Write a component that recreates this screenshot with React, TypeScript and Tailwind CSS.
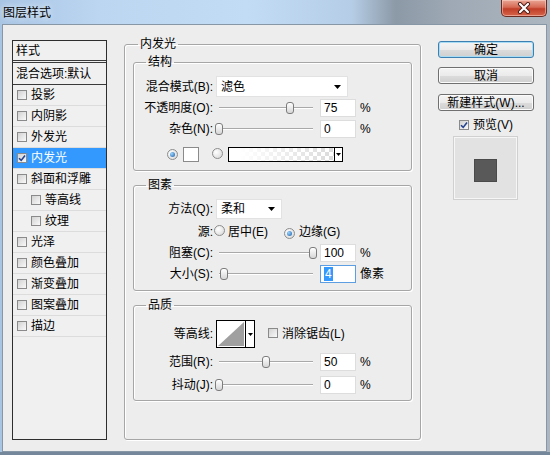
import React from "react";

type Item = { t: string; sel?: boolean; on?: boolean; indent?: boolean };

const ITEMS: Item[] = [
  { t: "投影" },
  { t: "内阴影" },
  { t: "外发光" },
  { t: "内发光", sel: true, on: true },
  { t: "斜面和浮雕" },
  { t: "等高线", indent: true },
  { t: "纹理", indent: true },
  { t: "光泽" },
  { t: "颜色叠加" },
  { t: "渐变叠加" },
  { t: "图案叠加" },
  { t: "描边" },
];

function Check({ on }: { on?: boolean }) {
  return (
    <span className="inline-flex w-[10px] h-[10px] shrink-0 items-center justify-center border border-[#8a8a8a] bg-[linear-gradient(135deg,#d2d2d2,#f9f9f9)]">
      {on && (
        <svg width="8" height="8" viewBox="0 0 8 8">
          <path d="M1 4.2 L3.2 6.4 L7 1.4" stroke="#24438f" strokeWidth="1.6" fill="none" />
        </svg>
      )}
    </span>
  );
}

function Radio({ on }: { on?: boolean }) {
  return (
    <span className="inline-flex w-[11px] h-[11px] shrink-0 items-center justify-center rounded-full border border-[#8c8c8c] bg-[radial-gradient(circle_at_35%_35%,#ffffff,#d4d4d4)]">
      {on && <span className="w-[5px] h-[5px] rounded-full bg-[radial-gradient(circle_at_35%_35%,#9ad6ff,#1b5aa6)]" />}
    </span>
  );
}

function Arrow() {
  return (
    <svg width="7" height="4" viewBox="0 0 7 4">
      <path d="M0 0 H7 L3.5 4 Z" fill="#000" />
    </svg>
  );
}

function Slider({ pos }: { pos: number }) {
  return (
    <div className="relative w-[100px] h-[14px] shrink-0">
      <div className="absolute left-[3px] right-[3px] top-[6px] h-[2px] border-t border-[#a9a9a9] border-b border-b-white" />
      <div
        className="absolute top-[1px] w-[8px] h-[12px] rounded-[3px] border border-[#7c7c7c] bg-[linear-gradient(#ffffff,#d6d6d6)]"
        style={{ left: 3 + pos * 94 - 4 }}
      />
    </div>
  );
}

function Num({ v, focus }: { v: string; focus?: boolean }) {
  return (
    <div
      className={
        focus
          ? "w-[36px] h-[18px] flex items-center pl-[3px] bg-white border border-[#5d9de2]"
          : "w-[36px] h-[18px] flex items-center pl-[3px] bg-white border border-[#dddddd]"
      }
    >
      {focus ? <span className="bg-[#3399ff] text-white px-[1px]">{v}</span> : v}
    </div>
  );
}

function SliderRow({
  label,
  pos,
  v,
  unit,
  cls,
  focus,
}: {
  label: string;
  pos: number;
  v: string;
  unit: string;
  cls: string;
  focus?: boolean;
}) {
  return (
    <div className={"flex items-center h-[18px] " + cls}>
      <span className="w-[79px] text-right whitespace-nowrap">{label}</span>
      <div className="ml-[3px]">
        <Slider pos={pos} />
      </div>
      <div className="ml-[4px]">
        <Num v={v} focus={focus} />
      </div>
      <span className="ml-[4px]">{unit}</span>
    </div>
  );
}

function Group({ title, cls, children }: { title: string; cls: string; children: React.ReactNode }) {
  return (
    <fieldset className={"border border-[#a6a6a6] rounded-[3px] shadow-[inset_1px_1px_0_#fff,1px_1px_0_#fff] " + cls}>
      <legend className="ml-[12px] px-[2px] leading-[14px]">{title}</legend>
      {children}
    </fieldset>
  );
}

function Btn({ label, def, cls }: { label: string; def?: boolean; cls: string }) {
  return (
    <div
      className={
        (def
          ? "border-[#3c7fb1] shadow-[inset_0_0_0_1px_#a8dcf5] "
          : "border-[#707070] shadow-[inset_0_0_0_1px_#fbfbfb] ") +
        "h-[17px] w-[96px] flex items-center justify-center rounded-[3px] border bg-[linear-gradient(#f4f4f4_0%,#ebebeb_50%,#dcdcdc_51%,#cfcfcf_100%)] whitespace-nowrap " +
        cls
      }
    >
      {label}
    </div>
  );
}

export default function App() {
  return (
    <div className="w-[550px] h-[455px] flex flex-col overflow-hidden text-[12px] leading-[14px] text-black font-['Liberation_Sans','Noto_Sans_CJK_SC',sans-serif] bg-[linear-gradient(to_right,#a9c5e4_0%,#bcd6f1_18%,#c3dcf5_45%,#b5cde6_64%,#8c99a6_72%,#9ea9b5_82%,#acb6c0_100%)]">
      {/* title bar */}
      <div className="h-[24px] flex items-start justify-between shrink-0">
        <span className="ml-[3px] mt-[6px] [text-shadow:0_0_6px_#fff]">图层样式</span>
        <div className="mr-[3px] w-[46px] h-[17px] flex items-center justify-center rounded-b-[5px] border border-t-0 border-[#6a2b22] bg-[linear-gradient(#e9a796_0%,#d66a55_45%,#c13e29_55%,#d5644a_100%)] shadow-[inset_0_0_0_1px_rgba(255,220,210,0.5)]">
          <svg width="14" height="12" viewBox="0 0 14 12">
            <path d="M3 2 L11 10 M11 2 L3 10" stroke="#4a1a14" strokeWidth="4" strokeLinecap="round" />
            <path d="M3 2 L11 10 M11 2 L3 10" stroke="#fff" strokeWidth="2.2" strokeLinecap="round" />
          </svg>
        </div>
      </div>

      {/* body */}
      <div className="ml-[2px] w-[545px] h-[428px] shrink-0 flex bg-[#ededed] border border-[#8897a5]">
        {/* style list */}
        <div className="ml-[9px] mt-[15px] w-[95px] h-[400px] flex flex-col border border-[#2e2e2e] bg-[#f0f0f0]">
          <div className="h-[22px] flex items-center pl-[3px] border-b-[3px] border-double border-[#3a3a3a]">样式</div>
          <div className="h-[22px] flex items-center pl-[3px] border-b border-[#3a3a3a] whitespace-nowrap">混合选项:默认</div>
          {ITEMS.map((it) => (
            <div
              key={it.t}
              className={
                (it.sel ? "bg-[#3399ff] text-white " : "") +
                (it.indent ? "pl-[18px] " : "pl-[4px] ") +
                "h-[21px] flex items-center border-b border-[#dcdcdc] whitespace-nowrap"
              }
            >
              <Check on={it.on} />
              <span className="ml-[4px]">{it.t}</span>
            </div>
          ))}
        </div>

        {/* settings */}
        <fieldset className="ml-[17px] mt-[12px] w-[297px] h-[403px] px-[8px] border border-[#a6a6a6] rounded-[3px] shadow-[inset_1px_1px_0_#fff,1px_1px_0_#fff]">
          <legend className="ml-[5px] px-[2px] leading-[14px]">内发光</legend>

          <Group title="结构" cls="mt-[4px] pt-[7px] pb-[8px]">
            <div className="flex items-center h-[21px]">
              <span className="w-[79px] text-right whitespace-nowrap">混合模式(B):</span>
              <div className="ml-[3px] w-[132px] h-[21px] flex items-center justify-between pl-[4px] pr-[6px] bg-white border border-[#e2e2e2]">
                <span>滤色</span>
                <Arrow />
              </div>
            </div>
            <SliderRow label="不透明度(O):" pos={0.75} v="75" unit="%" cls="mt-[2px]" />
            <SliderRow label="杂色(N):" pos={0} v="0" unit="%" cls="mt-[3px]" />
            <div className="flex items-center h-[15px] mt-[9px] pl-[33px]">
              <Radio on />
              <span className="ml-[5px] w-[16px] h-[15px] bg-white border border-[#8a8a8a]" />
              <span className="ml-[13px]">
                <Radio />
              </span>
              <div className="ml-[5px] w-[115px] h-[15px] flex border border-black">
                <div className="flex-1 [background-image:linear-gradient(to_right,#ffffff_10%,rgba(255,255,255,0.15)),repeating-conic-gradient(#d4d4d4_0_25%,#ffffff_0_50%)] [background-size:100%_100%,8px_8px]" />
                <div className="w-[8px] flex items-center justify-center border-l border-black bg-white">
                  <svg width="5" height="3" viewBox="0 0 5 3">
                    <path d="M0 0 H5 L2.5 3 Z" fill="#000" />
                  </svg>
                </div>
              </div>
            </div>
          </Group>

          <Group title="图素" cls="mt-[7px] pt-[7px] pb-[7px]">
            <div className="flex items-center h-[20px]">
              <span className="w-[79px] text-right whitespace-nowrap">方法(Q):</span>
              <div className="ml-[3px] w-[66px] h-[20px] flex items-center justify-between pl-[4px] pr-[6px] bg-white border border-[#e2e2e2]">
                <span>柔和</span>
                <Arrow />
              </div>
            </div>
            <div className="flex items-center h-[14px] mt-[6px]">
              <span className="w-[79px] text-right">源:</span>
              <span className="ml-[1px]">
                <Radio />
              </span>
              <span className="ml-[3px] whitespace-nowrap">居中(E)</span>
              <span className="ml-[16px]">
                <Radio on />
              </span>
              <span className="ml-[4px] whitespace-nowrap">边缘(G)</span>
            </div>
            <SliderRow label="阻塞(C):" pos={1} v="100" unit="%" cls="mt-[5px]" />
            <SliderRow label="大小(S):" pos={0.05} v="4" unit="像素" cls="mt-[3px]" focus />
          </Group>

          <Group title="品质" cls="mt-[7px] pt-[8px] pb-[6px]">
            <div className="flex items-center h-[28px]">
              <span className="w-[79px] text-right whitespace-nowrap">等高线:</span>
              <div className="ml-[3px] w-[39px] h-[28px] flex border border-black bg-white">
                <svg width="28" height="26" viewBox="0 0 28 26" className="shrink-0">
                  <polygon points="1,25 27,1 27,25" fill="#a0a0a0" />
                </svg>
                <div className="flex-1 flex items-center justify-center border-l border-black">
                  <svg width="5" height="3" viewBox="0 0 5 3">
                    <path d="M0 0 H5 L2.5 3 Z" fill="#000" />
                  </svg>
                </div>
              </div>
              <span className="ml-[13px]">
                <Check />
              </span>
              <span className="ml-[4px] whitespace-nowrap">消除锯齿(L)</span>
            </div>
            <SliderRow label="范围(R):" pos={0.5} v="50" unit="%" cls="mt-[5px]" />
            <SliderRow label="抖动(J):" pos={0} v="0" unit="%" cls="mt-[5px]" />
          </Group>
        </fieldset>

        {/* buttons */}
        <div className="ml-[17px] mt-[16px] w-[96px] flex flex-col">
          <Btn label="确定" def cls="" />
          <Btn label="取消" cls="mt-[9px]" />
          <Btn label="新建样式(W)..." cls="mt-[10px]" />
          <div className="mt-[8px] h-[12px] flex items-center justify-center">
            <Check on />
            <span className="ml-[4px]">预览(V)</span>
          </div>
          <div className="mt-[6px] ml-[16px] w-[63px] h-[62px] flex items-center justify-center bg-[#e2e2e2] border border-[#f6f6f6] shadow-[0_0_0_1px_#d0d0d0]">
            <div className="mt-[4px] w-[23px] h-[23px] bg-[#595959] border border-[#4a4a4a]" />
          </div>
        </div>
      </div>
      <div className="h-[3px] shrink-0 bg-[#74879b]" />
    </div>
  );
}
